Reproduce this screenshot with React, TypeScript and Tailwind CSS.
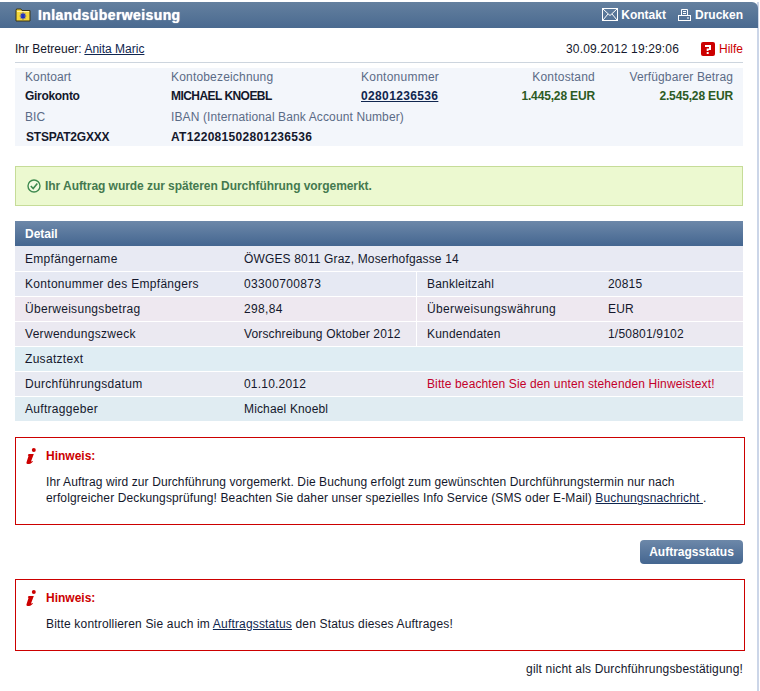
import React from "react";

const Folder = () => (
  <svg width="16" height="14" viewBox="0 0 16 14" className="shrink-0">
    <path d="M1 2.5 L1.5 1 H6 L7 2.5 H15 V13 H1 Z" fill="#f5d93a" stroke="#3a3418" strokeWidth="1" />
    <path d="M2 3.5 H14" stroke="#fff2a0" strokeWidth="1" />
    <path d="M8 4.5 V11.5 M4.8 8 H11.2 M5.7 5.7 L10.3 10.3 M10.3 5.7 L5.7 10.3" stroke="#1d2fc4" strokeWidth="1.2" />
    <circle cx="8" cy="8" r="1.6" fill="#1d2fc4" />
  </svg>
);

const Mail = () => (
  <svg width="16" height="13" viewBox="0 0 16 13" className="shrink-0">
    <rect x="0.5" y="0.5" width="15" height="12" fill="none" stroke="#fff" />
    <path d="M1 1 L8 7.5 L15 1 M1 12 L6 6 M15 12 L10 6" fill="none" stroke="#fff" />
  </svg>
);

const Printer = () => (
  <svg width="13" height="12" viewBox="0 0 13 12" className="shrink-0">
    <path d="M3.5 6 V0.5 H9.5 V6 M5 2.5 H8 M5 4.5 H8" fill="none" stroke="#fff" />
    <rect x="0.5" y="6.5" width="12" height="5" fill="none" stroke="#fff" />
    <path d="M9 9 H11" stroke="#fff" />
  </svg>
);

const Help = () => (
  <svg width="14" height="14" viewBox="0 0 14 14" className="shrink-0">
    <rect width="14" height="14" rx="2" fill="#cc0000" />
    <path d="M4 3 H10 V8 H7.5 V9 H5.7 V6.5 H8 V5 H4 Z" fill="#fff" />
    <rect x="5.7" y="10" width="2" height="2" fill="#fff" />
  </svg>
);

const Check = () => (
  <svg width="14" height="14" viewBox="0 0 14 14" className="shrink-0">
    <circle cx="7" cy="7" r="6" fill="#f3fbe0" stroke="#3f8a4f" strokeWidth="1.4" />
    <path d="M3.8 7 L6.2 9.5 L10.3 4.6" fill="none" stroke="#3f8a4f" strokeWidth="1.6" />
  </svg>
);

const InfoI = () => (
  <svg width="11" height="16" viewBox="0 0 11 16" className="shrink-0">
    <circle cx="7.8" cy="2" r="2" fill="#cc0000" />
    <path d="M2.5 6 H7.8 L5.2 13 C5 13.7 5.6 13.8 6.4 13 L7 13.4 C5.8 15 4 16 1.6 16 C0.6 16 0.2 15.2 0.6 14 L2.6 7.8 H1.8 Z" fill="#cc0000" />
  </svg>
);

function A({ children }: { children: React.ReactNode }) {
  return <a className="underline text-[#10264f]">{children}</a>;
}

type RowProps = {
  first?: boolean;
  bg: string;
  label: string;
  value?: string;
  vt?: string;
  l2?: string;
  v2?: string;
  lt2?: string;
};

function Row({ first, bg, label, value, vt = "tracking-[0.15px]", l2, v2, lt2 = "tracking-[0.2px]" }: RowProps) {
  return (
    <div className={`grid grid-cols-[229px_172px_1fr] h-[25px] items-center ${first ? "" : "border-t border-white"} ${bg}`}>
      <div className="pl-[10px] tracking-[0.3px]">{label}</div>
      {l2 ? <div className={vt}>{value}</div> : <div className={`col-span-2 ${vt}`}>{value}</div>}
      {l2 ? (
        <div className="h-full border-l border-white pl-[10px] grid grid-cols-[181px_1fr] items-center">
          <div className={lt2}>{l2}</div>
          <div className="tracking-[0.2px]">{v2}</div>
        </div>
      ) : null}
    </div>
  );
}

export default function App() {
  return (
    <div className="w-[760px] h-[691px] bg-white pt-[2px] overflow-hidden text-[12px] leading-[16px] text-[#14182c] font-['Liberation_Sans',Arial,sans-serif]">
      <div className="w-[759px] h-[689px] border-r-2 border-[#ccd6e8]">
        <div className="h-[26px] -mr-[1px] rounded-tr-[6px] bg-gradient-to-b from-[#64809f] to-[#4a6a90] flex items-center pl-[15px] pr-[15px] text-white font-bold">
          <Folder />
          <span className="ml-[7px] text-[14px] tracking-[0.4px] [text-shadow:0_0_1px_#fff]">Inlandsüberweisung</span>
          <div className="ml-auto flex items-center -mt-[1px]">
            <Mail />
            <span className="ml-[3px]">Kontakt</span>
            <span className="ml-[12px]"><Printer /></span>
            <span className="ml-[4px]">Drucken</span>
          </div>
        </div>

        <div className="pl-[15px] pr-[14px]">
          <div className="h-[35px] border-b border-[#cdd5de] flex items-center pt-[8px]">
            <span>Ihr Betreuer: <A>Anita Maric</A></span>
            <span className="ml-auto tracking-[0.15px]">30.09.2012 19:29:06</span>
            <span className="ml-[22px]"><Help /></span>
            <span className="ml-[4px] text-[#cc0000]">Hilfe</span>
          </div>

          <div className="mt-[5px] h-[78px] bg-[#f3f6fb] pl-[10px] grid grid-cols-[146px_190px_100px_134px_138px] grid-rows-[18px_20px_21px_19px] items-center text-[#5b6b86] tracking-[0.12px]">
            <div>Kontoart</div>
            <div className="tracking-[0.18px]">Kontobezeichnung</div>
            <div className="tracking-[0.25px]">Kontonummer</div>
            <div className="text-right tracking-[0.2px]">Kontostand</div>
            <div className="text-right">Verfügbarer Betrag</div>
            <div className="font-bold text-[#14182c] tracking-[-0.3px]">Girokonto</div>
            <div className="font-bold text-[#14182c] tracking-[-0.55px]">MICHAEL KNOEBL</div>
            <div className="font-bold tracking-[0.36px]"><A>02801236536</A></div>
            <div className="font-bold text-right text-[#2c5a24] tracking-[-0.15px]">1.445,28 EUR</div>
            <div className="font-bold text-right text-[#2c5a24] tracking-[-0.15px]">2.545,28 EUR</div>
            <div>BIC</div>
            <div className="col-span-4">IBAN (International Bank Account Number)</div>
            <div className="font-bold text-[#14182c] pl-[1px] tracking-[-0.2px]">STSPAT2GXXX</div>
            <div className="col-span-4 font-bold text-[#14182c] tracking-[0.3px]">AT122081502801236536</div>
          </div>

          <div className="mt-[20px] h-[40px] border border-[#c6dc98] bg-[#ecf9d0] flex items-center pl-[11px] font-bold text-[#44794f]">
            <Check />
            <span className="ml-[4px] tracking-[-0.05px]">Ihr Auftrag wurde zur späteren Durchführung vorgemerkt.</span>
          </div>

          <div className="mt-[15px] h-[25px] bg-gradient-to-b from-[#6d88a9] to-[#446690] flex items-center pl-[10px] font-bold text-white">Detail</div>
          <div>
            <Row first bg="bg-[#e8eaf3]" label="Empfängername" value="ÖWGES 8011 Graz, Moserhofgasse 14" />
            <Row bg="bg-[#e6e9f3]" label="Kontonummer des Empfängers" value="03300700873" vt="tracking-[0.36px]" l2="Bankleitzahl" v2="20815" />
            <Row bg="bg-[#eee8f0]" label="Überweisungsbetrag" value="298,84" vt="tracking-[0.36px]" l2="Überweisungswährung" lt2="tracking-[0.37px]" v2="EUR" />
            <Row bg="bg-[#ebe9f1]" label="Verwendungszweck" value="Vorschreibung Oktober 2012" l2="Kundendaten" v2="1/50801/9102" />
            <Row bg="bg-[#dfedf3]" label="Zusatztext" />
            <div className="grid grid-cols-[229px_172px_1fr] h-[25px] items-center border-t border-white bg-[#e8eaf2]">
              <div className="pl-[10px] tracking-[0.3px]">Durchführungsdatum</div>
              <div className="tracking-[0.2px]">01.10.2012</div>
              <div className="pl-[11px] text-[#c4002a] tracking-[0.12px]">Bitte beachten Sie den unten stehenden Hinweistext!</div>
            </div>
            <Row bg="bg-[#e0ecf2]" label="Auftraggeber" value="Michael Knoebl" />
          </div>

          <div className="mt-[16px] -mr-[2px] h-[88px] border border-[#cc0000] pl-[10px] pt-[10px] flex gap-[9px]">
            <InfoI />
            <div>
              <div className="font-bold text-[#cc0000]">Hinweis:</div>
              <div className="mt-[10px] tracking-[0.1px]">
                Ihr Auftrag wird zur Durchführung vorgemerkt. Die Buchung erfolgt zum gewünschten Durchführungstermin nur nach
                <br />
                <span className="tracking-[0.12px]">erfolgreicher Deckungsprüfung! Beachten Sie daher unser spezielles Info Service (SMS oder E-Mail) <A>Buchungsnachricht </A>.</span>
              </div>
            </div>
          </div>

          <div className="mt-[15px] flex justify-end">
            <button className="h-[24px] w-[103px] rounded-[4px] bg-gradient-to-b from-[#6d88a9] to-[#446690] font-bold text-white">Auftragsstatus</button>
          </div>

          <div className="mt-[15px] -mr-[2px] h-[72px] border border-[#cc0000] pl-[10px] pt-[10px] flex gap-[9px]">
            <InfoI />
            <div>
              <div className="font-bold text-[#cc0000]">Hinweis:</div>
              <div className="mt-[10px] tracking-[0.17px]">
                Bitte kontrollieren Sie auch im <A>Auftragsstatus</A> den Status dieses Auftrages!
              </div>
            </div>
          </div>

          <div className="mt-[10px] text-right tracking-[0.17px]">gilt nicht als Durchführungsbestätigung!</div>
        </div>
      </div>
    </div>
  );
}
